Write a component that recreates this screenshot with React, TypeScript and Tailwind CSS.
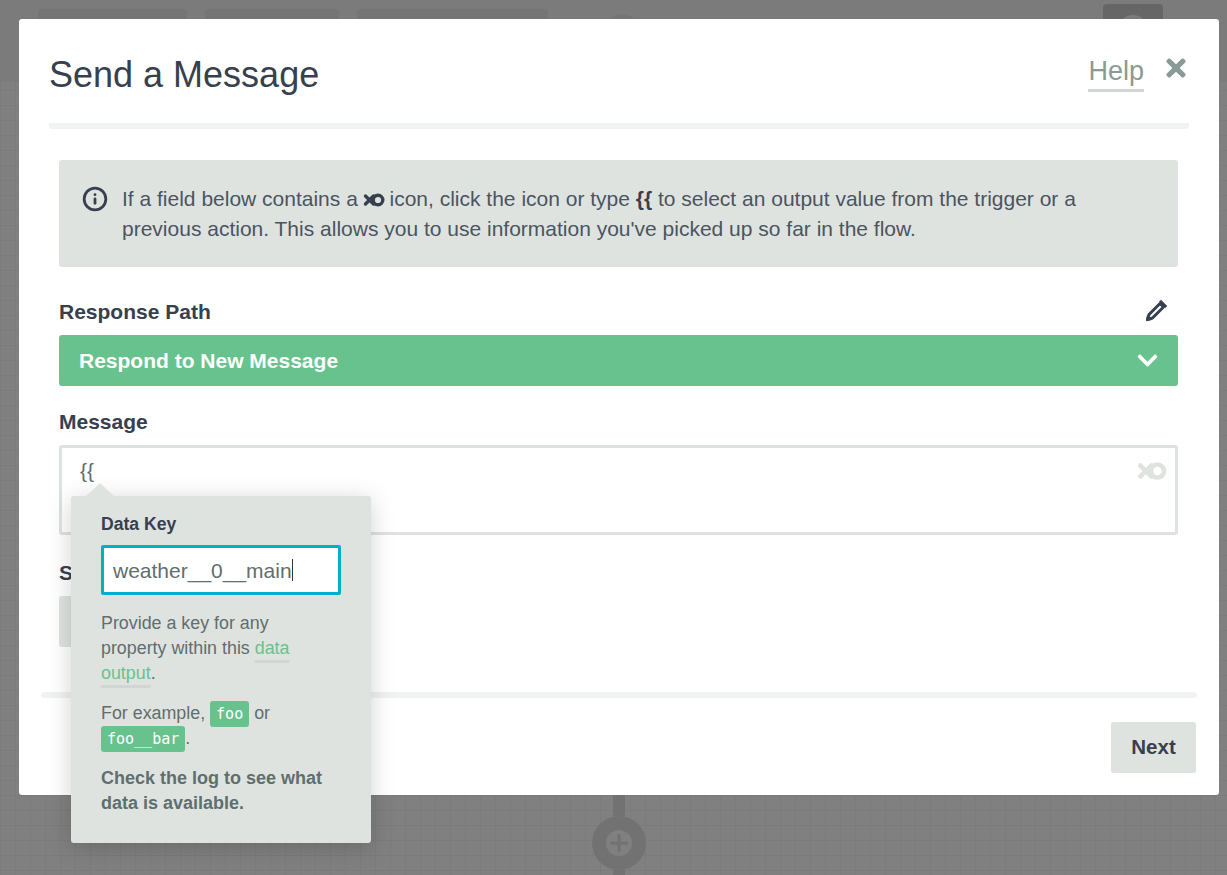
import { Info, Plus } from 'lucide-react';
import { FaChevronDown, FaTimes } from 'react-icons/fa';

function ExpressionIcon({ className }: { className: string }) {
  return (
    <svg viewBox="0 0 22 14" fill="none" stroke="currentColor" strokeWidth="3.4" strokeLinecap="round" className={className}>
      <circle cx="15" cy="7" r="4.8" />
      <path d="M2.5 3 L10.5 11 M2.5 11 L10.5 3" />
    </svg>
  );
}

function PencilIcon({ className }: { className: string }) {
  return (
    <svg viewBox="0 0 24 24" className={className}>
      <path d="M3.5 20.5 L5 15.5 L16 4.5 L19.5 8 L8.5 19 Z" fill="none" stroke="currentColor" strokeWidth="3" strokeLinejoin="round" />
      <path d="M15 2.8 L17 0.8 L23.2 7 L21.2 9 Z M2 22 L3 16.5 L7.5 21 Z" fill="currentColor" />
    </svg>
  );
}

function Background() {
  return (
    <div className="h-[875px] flex flex-col bg-[#808080] bg-[linear-gradient(#7b7b7b_1px,transparent_1px),linear-gradient(90deg,#7b7b7b_1px,transparent_1px)] bg-[size:15px_15px]">
      <div className="h-[82px] bg-[#7b7b7b] flex items-start gap-[18px] pl-[38px] pt-[9px] shrink-0">
        <div className="w-[149px] h-[40px] rounded bg-[#757575]" />
        <div className="w-[134px] h-[40px] rounded bg-[#757575]" />
        <div className="w-[191px] h-[40px] rounded bg-[#757575]" />
        <div className="w-[32px] h-[32px] rounded-full bg-[#757575] ml-[40px] mt-[5px]" />
        <div className="w-[60px] h-[60px] rounded bg-[#666666] ml-[447px] -mt-[5px] flex justify-center pt-[11px]">
          <div className="w-[30px] h-[30px] rounded-full bg-[#7b7b7b]" />
        </div>
      </div>
      <div className="flex-1 flex flex-col items-center justify-end pl-[11px]">
        <div className="w-[12px] h-[21px] bg-[#727272]" />
        <div className="w-[54px] h-[54px] rounded-full border-[14px] border-[#727272] flex items-center justify-center bg-[#808080] shrink-0">
          <Plus className="w-[26px] h-[26px] shrink-0 text-[#727272]" strokeWidth={3} />
        </div>
        <div className="w-[12px] h-[5px] bg-[#727272]" />
      </div>
    </div>
  );
}

function DataKeyPopover() {
  return (
    <div className="absolute left-[52px] top-[477px] w-[300px] h-[347px] bg-[#dfe3e0] rounded-[3px] shadow-[0_4px_24px_rgba(0,0,0,0.18)] px-[30px] pt-[17px] text-[17.85px] leading-[25px] text-[#5f6e6e]">
      <div className="absolute left-[15px] -top-[13px] w-0 h-0 border-x-[14px] border-x-transparent border-b-[13px] border-b-[#dfe3e0]" />
      <div className="font-bold text-[#36404e] text-[17.6px] leading-[22px]">Data Key</div>
      <div className="mt-[10px] h-[50px] w-[240px] bg-white border-[3px] border-[#00b0c8] rounded-[2px] flex items-center pl-[9px] text-[21px]">
        <span>weather__0__main</span>
        <span className="w-px h-[22px] bg-[#2f3640]" />
      </div>
      <p className="mt-[16px] max-w-[220px]">
        Provide a key for any property within this{' '}
        <span className="text-[#68c28d] underline decoration-[#d2d6d3] decoration-[3px] underline-offset-[6px]">data output</span>.
      </p>
      <p className="mt-[15px]">
        For example, <code className="font-['DejaVu_Sans_Mono',monospace] text-[15px] leading-none text-white bg-[#68c28d] rounded-[3px] px-[6px] py-[4px]">foo</code> or{' '}
        <code className="font-['DejaVu_Sans_Mono',monospace] text-[15px] leading-none text-white bg-[#68c28d] rounded-[3px] px-[6px] py-[4px]">foo__bar</code>.
      </p>
      <p className="mt-[15px] font-bold text-[18px]">Check the log to see what data is available.</p>
    </div>
  );
}

export default function App() {
  return (
    <div className="relative w-[1227px] h-[875px] overflow-hidden font-['Liberation_Sans',Arial,sans-serif]">
      <Background />

      {/* Modal */}
      <div className="absolute left-[19px] top-[19px] w-[1200px] h-[776px] bg-white rounded-[3px] text-[#36404e]">
        <div className="mx-[30px] h-[110px] border-b-[6px] border-[#f1f3f2] rounded-[3px] flex items-start justify-between">
          <h1 className="text-[36px] leading-[44px] mt-[34px] text-[#36404e]">Send a Message</h1>
          <div className="flex items-start mr-[1px] mt-[34px]">
            <span className="text-[27px] leading-[36px] text-[#8a9a96] border-b-[3px] border-[#d2d6d3]">Help</span>
            <FaTimes className="w-[24px] h-[28px] ml-[20px] mt-[1px] text-[#8a9a96]" />
          </div>
        </div>

        <div className="ml-[40px] mr-[41px] mt-[31px]">
          <div className="h-[107px] bg-[#dfe3e0] rounded-[3px] flex pl-[23px] pt-[24px] pr-[60px]">
            <Info className="w-[26px] h-[26px] shrink-0 mt-[2px] text-[#36404e]" strokeWidth={2.6} />
            <p className="ml-[14px] text-[21px] leading-[30px] text-[#4a5561]">
              If a field below contains a <ExpressionIcon className="inline-block w-[22px] h-[14px] align-[-1px] -ml-[1px] -mr-[1px] text-[#36404e]" /> icon, click the icon or type <b className="text-[#36404e]">{'{{'}</b> to select an output value from the trigger or a previous action. This allows you to use information you've picked up so far in the flow.
            </p>
          </div>

          <div className="flex items-center justify-between mt-[32px] h-[26px]">
            <label className="font-bold text-[21px]">Response Path</label>
            <PencilIcon className="w-[24px] h-[24px] mr-[10px] -mt-[3px] text-[#36404e]" />
          </div>
          <div className="mt-[10px] h-[51px] bg-[#68c28d] rounded-[3px] flex items-center justify-between pl-[20px] pr-[19px] text-white font-bold text-[21px]">
            <span>Respond to New Message</span>
            <FaChevronDown className="w-[23px] h-[23px]" />
          </div>

          <label className="block font-bold text-[21px] mt-[20px] h-[26px]">Message</label>
          <div className="mt-[13px] h-[90px] border-[3px] border-[#dfe3e0] rounded-[3px] flex justify-between pl-[18px] pr-[8px] pt-[9px] text-[21px] text-[#5f6e6e]">
            <span className="leading-[28px]">{'{{'}</span>
            <ExpressionIcon className="w-[30px] h-[20px] mt-[4px] text-[#dfe3e0]" />
          </div>

          <label className="block font-bold text-[21px] mt-[22px] h-[26px]">Send</label>
          <div className="mt-[13px] h-[51px] w-[200px] bg-[#dfe3e0] rounded-[3px]" />
        </div>

        <div className="mx-[22px] mt-[45px] h-[6px] bg-[#f1f3f2] rounded-[3px]" />
        <div className="flex justify-end mr-[23px] mt-[24px]">
          <button className="w-[85px] h-[51px] bg-[#dfe3e0] rounded-[3px] font-bold text-[20.5px]">Next</button>
        </div>

        <DataKeyPopover />
      </div>
    </div>
  );
}
